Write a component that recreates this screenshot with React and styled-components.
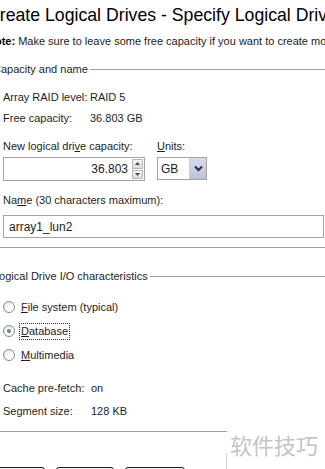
import React from "react";
import styled, { createGlobalStyle } from "styled-components";

const GlobalStyle = createGlobalStyle`
  html, body {
    margin: 0;
    padding: 0;
    background: #ffffff;
    overflow: hidden;
  }
  body {
    width: 325px;
    height: 469px;
    font-family: "Liberation Sans", Arial, sans-serif;
    color: #1e1e1e;
  }
`;

const Screen = styled.div`
  position: relative;
  width: 325px;
  height: 469px;
  overflow: hidden;
`;

const Page = styled.div`
  margin-left: -13px;
  width: 338px;
  padding-top: 5px;
  white-space: nowrap;
`;

const Title = styled.h1`
  margin: 0;
  font-size: 17.7px;
  line-height: 20px;
  font-weight: normal;
  color: #000;
`;

const Note = styled.p`
  margin: 9px 0 0;
  font-size: 11px;
  line-height: 14px;
  color: #222;

  b {
    font-weight: bold;
    color: #000;
  }
`;

const Group = styled.section`
  margin-top: ${(p) => p.$top}px;
  padding: 0 1px ${(p) => p.$bottom}px 16px;
  border-bottom: 1px solid #a2a2a2;
  width: ${(p) => p.$width || "auto"};
  box-sizing: border-box;
`;

const Legend = styled.div`
  display: flex;
  align-items: center;
  margin-left: -10px;
  margin-right: ${(p) => (p.$overhang ? "-100px" : "-1px")};
  font-size: 11px;
  line-height: 14px;
  color: #1e1e1e;

  &::after {
    content: "";
    flex: 1;
    margin-left: 2px;
    border-top: 1px solid #a2a2a2;
  }
`;

const InfoRow = styled.div`
  display: grid;
  grid-template-columns: ${(p) => p.$col || 87}px auto;
  margin-top: ${(p) => p.$top}px;
  font-size: 11px;
  line-height: 14px;
`;

const Label = styled.div`
  font-size: 11px;
  line-height: 14px;
  margin-top: ${(p) => p.$top || 0}px;

  u {
    text-decoration: underline;
  }
`;

const CapacityRow = styled.div`
  display: grid;
  grid-template-columns: 154px auto;
  margin-top: ${(p) => p.$top}px;
`;

const Spinner = styled.div`
  display: flex;
  align-items: center;
  width: 142px;
  height: 24px;
  margin-top: 4px;
  border: 1px solid #a4a4a4;
  box-sizing: border-box;
  background: #fff;
`;

const SpinValue = styled.div`
  flex: 1;
  text-align: right;
  padding-right: 4px;
  font-size: 12px;
`;

const SpinButtons = styled.div`
  display: flex;
  flex-direction: column;
  gap: 1px;
  width: 11px;
  height: 20px;
  margin-right: 1px;
`;

const SpinButton = styled.div`
  flex: 1;
  display: flex;
  align-items: center;
  justify-content: center;
  background: linear-gradient(#f4f4f4, #dcdcdc);
  border: 1px solid #b8b8b8;
  box-sizing: border-box;
`;

const Select = styled.div`
  display: flex;
  align-items: center;
  width: 50px;
  height: 23px;
  margin-top: 4px;
  border: 1px solid #a4a4a4;
  box-sizing: border-box;
  background: #fff;
  font-size: 12px;
`;

const SelectText = styled.div`
  flex: 1;
  padding-left: 3px;
`;

const SelectButton = styled.div`
  display: flex;
  align-items: center;
  justify-content: center;
  width: 17px;
  height: 21px;
  background: linear-gradient(#d8dcec, #bcc2da);
  border-left: 1px solid #c8cce0;
  box-sizing: border-box;
`;

const TextInput = styled.div`
  margin-top: 8px;
  height: 23px;
  padding-left: 5px;
  border: 1px solid #a4a4a4;
  box-sizing: border-box;
  display: flex;
  align-items: center;
  font-size: 12px;
  background: #fff;
`;

const RadioList = styled.div`
  margin-top: 12px;
`;

const RadioRow = styled.div`
  display: flex;
  align-items: center;
  height: 24px;
  font-size: 11px;
`;

const RadioCircle = styled.span`
  width: 12px;
  height: 12px;
  border-radius: 50%;
  border: 1px solid #8c8c8c;
  box-sizing: border-box;
  background: radial-gradient(circle at 65% 65%, #ffffff 30%, #dcdcdc 100%);
  display: flex;
  align-items: center;
  justify-content: center;
  margin-right: 5px;

  &::after {
    content: "";
    width: 4px;
    height: 4px;
    border-radius: 50%;
    background: ${(p) => (p.$checked ? "#48a048" : "transparent")};
  }
`;

const RadioText = styled.span`
  padding: 1px 1px;
  outline: ${(p) => (p.$focus ? "1px dotted #333" : "none")};
  line-height: 13px;
`;

const ButtonRow = styled.div`
  display: flex;
  gap: 11px;
  margin-top: 35px;
`;

const Button = styled.div`
  width: ${(p) => p.$w}px;
  height: 23px;
  border: 1px solid #1e1e1e;
  border-radius: 3px;
  box-sizing: border-box;
  background: #f2f2ec;
`;

const Watermark = styled.div`
  position: absolute;
  left: 227px;
  top: 424px;
  width: 98px;
  height: 45px;
  background: #fff;
  color: #c4c4c4;
  font-family: "Noto Sans CJK SC", sans-serif;
  font-size: 22px;
  line-height: 24px;
  padding: 8px 0 0 3px;
  box-sizing: border-box;

  &::before {
    content: "";
    position: absolute;
    left: -1px;
    top: 29px;
    bottom: 0;
    border-left: 1px solid #d4d4d4;
  }
`;

const UpArrow = () => (
  <svg width="5" height="3" viewBox="0 0 5 3">
    <path d="M0 3 L2.5 0 L5 3 Z" fill="#4a4a4a" />
  </svg>
);

const DownArrow = () => (
  <svg width="5" height="3" viewBox="0 0 5 3">
    <path d="M0 0 L2.5 3 L5 0 Z" fill="#4a4a4a" />
  </svg>
);

const Chevron = () => (
  <svg width="9" height="7" viewBox="0 0 9 7">
    <path d="M1 1.5 L4.5 5 L8 1.5" fill="none" stroke="#2a2a40" strokeWidth="2" />
  </svg>
);

const radios = [
  { key: "fs", mn: "F", rest: "ile system (typical)" },
  { key: "db", mn: "D", rest: "atabase", checked: true },
  { key: "mm", mn: "M", rest: "ultimedia" },
];

export default function App() {
  return (
    <Screen>
      <GlobalStyle />
      <Page>
        <Title>Create Logical Drives - Specify Logical Drives</Title>
        <Note>
          <b>Note:</b> Make sure to leave some free capacity if you want to create more
        </Note>

        <Group $top={14} $bottom={9}>
          <Legend>Capacity and name</Legend>
          <InfoRow $top={14}>
            <span>Array RAID level:</span>
            <span>RAID 5</span>
          </InfoRow>
          <InfoRow $top={7}>
            <span>Free capacity:</span>
            <span>36.803 GB</span>
          </InfoRow>
          <CapacityRow $top={14}>
            <div>
              <Label>
                New logical dri<u>v</u>e capacity:
              </Label>
              <Spinner>
                <SpinValue>36.803</SpinValue>
                <SpinButtons>
                  <SpinButton>
                    <UpArrow />
                  </SpinButton>
                  <SpinButton>
                    <DownArrow />
                  </SpinButton>
                </SpinButtons>
              </Spinner>
            </div>
            <div>
              <Label>
                <u>U</u>nits:
              </Label>
              <Select>
                <SelectText>GB</SelectText>
                <SelectButton>
                  <Chevron />
                </SelectButton>
              </Select>
            </div>
          </CapacityRow>
          <Label $top={12}>
            Na<u>m</u>e (30 characters maximum):
          </Label>
          <TextInput>array1_lun2</TextInput>
        </Group>

        <Group $top={21} $bottom={13} $width="240px">
          <Legend $overhang>Logical Drive I/O characteristics</Legend>
          <RadioList>
            {radios.map((r) => (
              <RadioRow key={r.key}>
                <RadioCircle $checked={r.checked} />
                <RadioText $focus={r.checked}>
                  <u>{r.mn}</u>
                  {r.rest}
                </RadioText>
              </RadioRow>
            ))}
          </RadioList>
          <InfoRow $top={14} $col={88}>
            <span>Cache pre-fetch:</span>
            <span>on</span>
          </InfoRow>
          <InfoRow $top={9} $col={88}>
            <span>Segment size:</span>
            <span>128 KB</span>
          </InfoRow>
        </Group>

        <ButtonRow>
          <Button $w={58} />
          <Button $w={58} />
          <Button $w={60} />
        </ButtonRow>
      </Page>
      <Watermark>软件技巧</Watermark>
    </Screen>
  );
}
